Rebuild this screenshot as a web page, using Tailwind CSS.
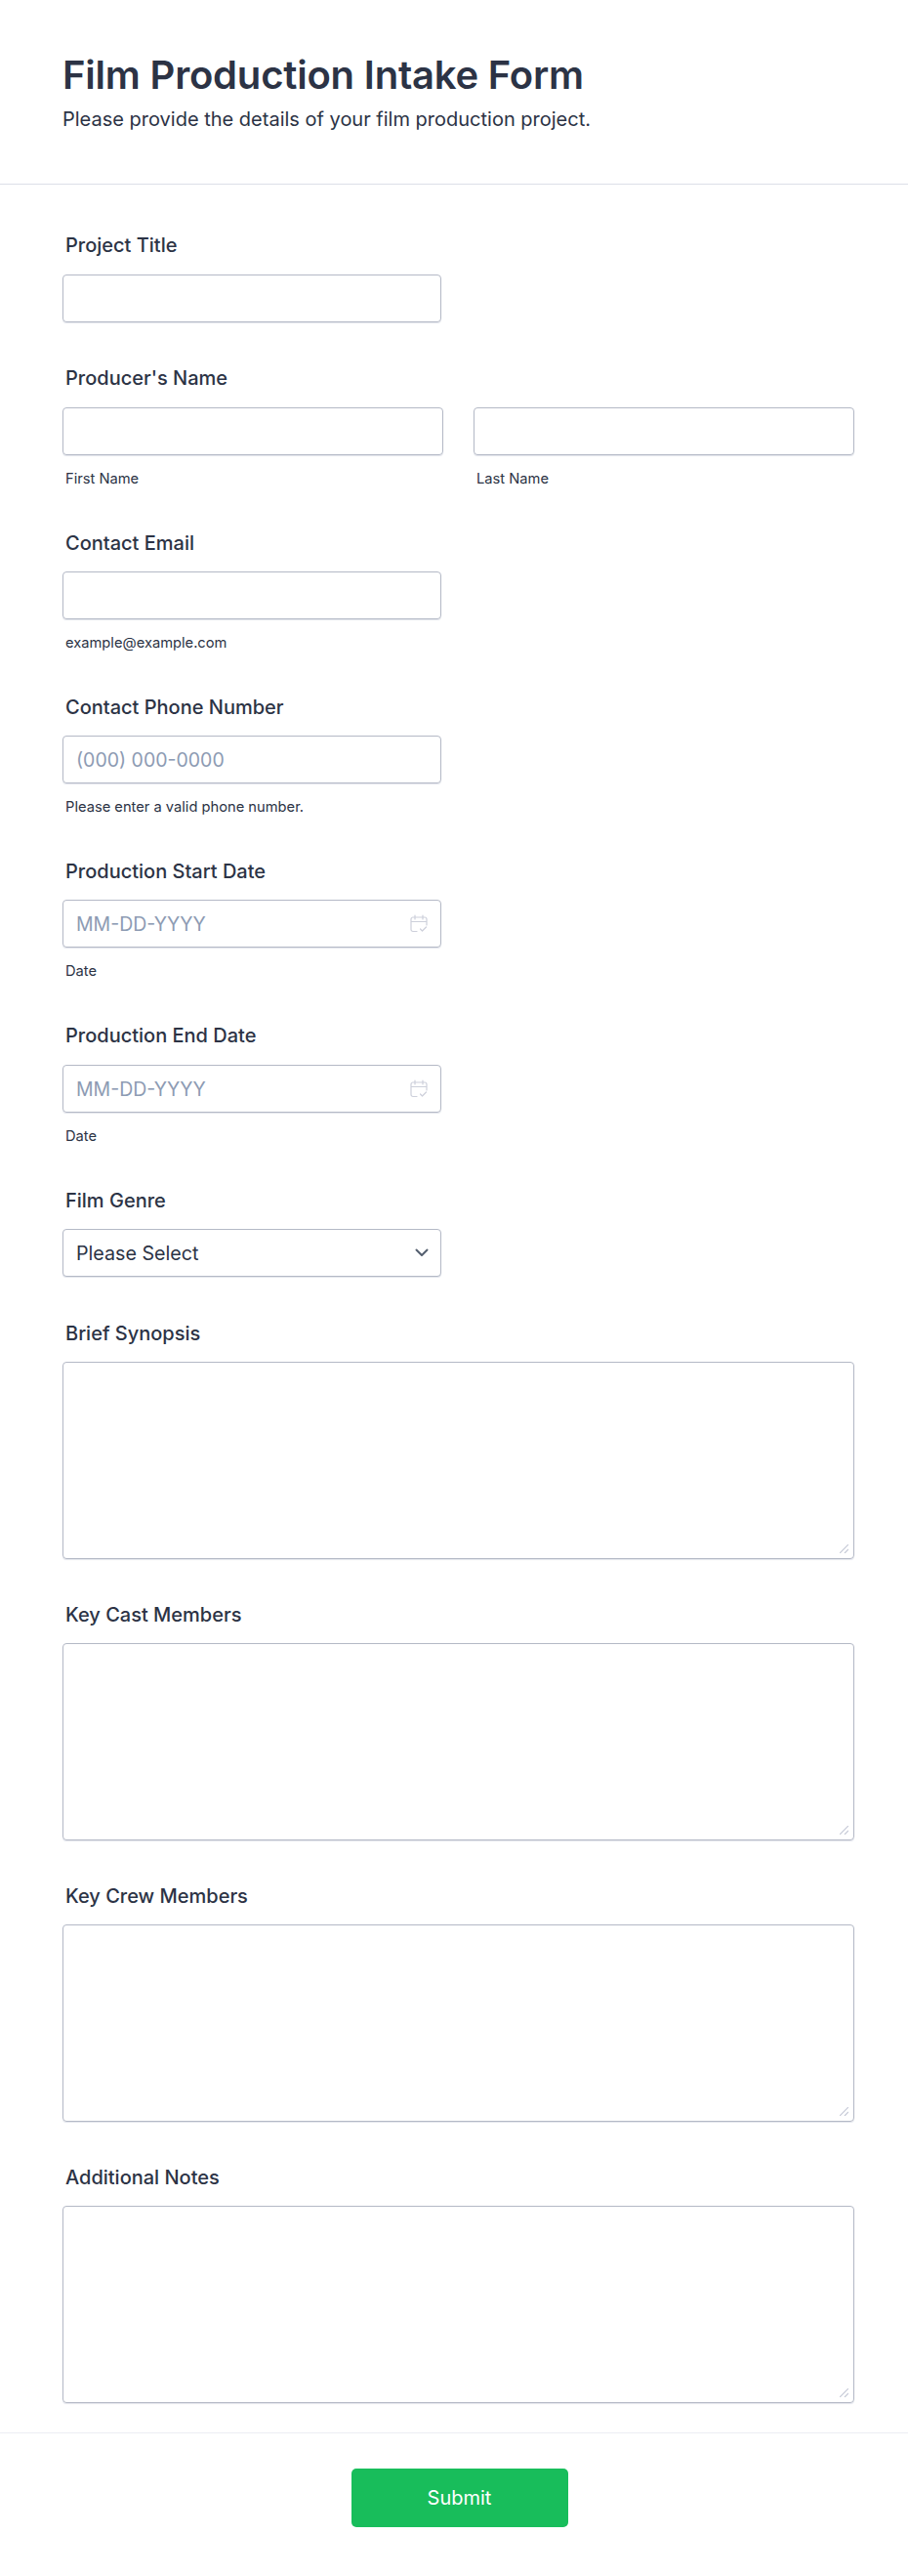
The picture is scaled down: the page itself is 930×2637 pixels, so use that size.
<!DOCTYPE html>
<html lang="en">
<head>
    <meta charset="UTF-8">
    <meta name="viewport" content="width=device-width, initial-scale=1.0">
    <title>Film Production Intake Form</title>
    <script src="https://cdn.jsdelivr.net/npm/@tailwindcss/browser@4"></script>
</head>
<body class="bg-white text-[#2c3345] font-['Inter',sans-serif]">
    <form class="h-[2637px] overflow-hidden">
        <header class="h-[189px] border-b border-[#dcdfe8] px-16 pt-[52px]">
            <h1 class="text-[40px] leading-[50px] font-semibold tracking-[-0.2px]">Film Production Intake Form</h1>
            <p class="text-[20px] leading-[28px] mt-[6px]">Please provide the details of your film production project.</p>
        </header>

        <div class="pl-16 pr-[55px] pt-[50px]">
            <!-- Project Title -->
            <label class="block text-[20px] leading-6 font-[450] pl-[3px] mb-[18px]">Project Title</label>
            <input type="text" class="block w-[388px] h-[49px] border border-[#b4b9c6] shadow-[0_1px_1px_#e3e5ec] rounded px-[13px] text-[19.5px]">

            <!-- Producer's Name -->
            <label class="block text-[20px] leading-6 font-[450] pl-[3px] mt-[45px] mb-[18px]">Producer's Name</label>
            <div class="flex gap-[31px]">
                <div class="flex-1">
                    <input type="text" class="block w-full h-[49px] border border-[#b4b9c6] shadow-[0_1px_1px_#e3e5ec] rounded px-[13px] text-[19.5px]">
                    <p class="text-[14.7px] leading-5 pl-[3px] mt-[14px]">First Name</p>
                </div>
                <div class="flex-1">
                    <input type="text" class="block w-full h-[49px] border border-[#b4b9c6] shadow-[0_1px_1px_#e3e5ec] rounded px-[13px] text-[19.5px]">
                    <p class="text-[14.7px] leading-5 pl-[3px] mt-[14px]">Last Name</p>
                </div>
            </div>

            <!-- Contact Email -->
            <label class="block text-[20px] leading-6 font-[450] pl-[3px] mt-[44px] mb-[17px]">Contact Email</label>
            <input type="email" class="block w-[388px] h-[49px] border border-[#b4b9c6] shadow-[0_1px_1px_#e3e5ec] rounded px-[13px] text-[19.5px]">
            <p class="text-[14.7px] leading-5 pl-[3px] mt-[14px]">example@example.com</p>

            <!-- Contact Phone Number -->
            <label class="block text-[20px] leading-6 font-[450] pl-[3px] mt-[44px] mb-[17px]">Contact Phone Number</label>
            <input type="tel" placeholder="(000) 000-0000" class="block w-[388px] h-[49px] border border-[#b4b9c6] shadow-[0_1px_1px_#e3e5ec] rounded px-[13px] pt-[1px] text-[19.5px] placeholder:text-[#8d9bb3]">
            <p class="text-[14.7px] leading-5 pl-[3px] mt-[14px]">Please enter a valid phone number.</p>

            <!-- Production Start Date -->
            <label class="block text-[20px] leading-6 font-[450] pl-[3px] mt-[44px] mb-[17px]">Production Start Date</label>
            <div class="relative w-[388px]">
                <input type="text" placeholder="MM-DD-YYYY" class="block w-full h-[49px] border border-[#b4b9c6] shadow-[0_1px_1px_#e3e5ec] rounded px-[13px] pt-[1px] text-[19.5px] placeholder:text-[#8d9bb3]">
                <svg class="absolute right-[14px] top-[15px] w-[18px] h-[19px]" viewBox="0 0 18 19" fill="none" stroke="#cdd0db" stroke-width="1.2" stroke-linecap="round" stroke-linejoin="round">
                    <path d="M7 17.5H3a2 2 0 0 1-2-2V5a2 2 0 0 1 2-2h12a2 2 0 0 1 2 2v6M1 7.5h16M5 1v4M13 1v4M10.5 15l2 2 4-4"/>
                </svg>
            </div>
            <p class="text-[14.7px] leading-5 pl-[3px] mt-[14px]">Date</p>

            <!-- Production End Date -->
            <label class="block text-[20px] leading-6 font-[450] pl-[3px] mt-[44px] mb-[18px]">Production End Date</label>
            <div class="relative w-[388px]">
                <input type="text" placeholder="MM-DD-YYYY" class="block w-full h-[49px] border border-[#b4b9c6] shadow-[0_1px_1px_#e3e5ec] rounded px-[13px] pt-[1px] text-[19.5px] placeholder:text-[#8d9bb3]">
                <svg class="absolute right-[14px] top-[15px] w-[18px] h-[19px]" viewBox="0 0 18 19" fill="none" stroke="#cdd0db" stroke-width="1.2" stroke-linecap="round" stroke-linejoin="round">
                    <path d="M7 17.5H3a2 2 0 0 1-2-2V5a2 2 0 0 1 2-2h12a2 2 0 0 1 2 2v6M1 7.5h16M5 1v4M13 1v4M10.5 15l2 2 4-4"/>
                </svg>
            </div>
            <p class="text-[14.7px] leading-5 pl-[3px] mt-[14px]">Date</p>

            <!-- Film Genre -->
            <label class="block text-[20px] leading-6 font-[450] pl-[3px] mt-[44px] mb-[17px]">Film Genre</label>
            <div class="relative w-[388px]">
                <select class="block w-full h-[49px] border border-[#b4b9c6] shadow-[0_1px_1px_#e3e5ec] rounded px-[13px] pt-[2px] text-[19.7px] appearance-none bg-white">
                    <option>Please Select</option>
                </select>
                <svg class="absolute right-[13px] top-[20px] w-[14px] h-[9px]" viewBox="0 0 14 9" fill="none" stroke="#545f6f" stroke-width="2" stroke-linecap="round" stroke-linejoin="round">
                    <path d="M1.5 1.5 7 7l5.5-5.5"/>
                </svg>
            </div>

            <!-- Brief Synopsis -->
            <label class="block text-[20px] leading-6 font-[450] pl-[3px] mt-[46px] mb-[17px]">Brief Synopsis</label>
            <div class="relative">
                <textarea class="block w-full h-[202px] border border-[#b4b9c6] shadow-[0_1px_1px_#e3e5ec] rounded resize-none"></textarea>
                <svg class="absolute right-[6px] bottom-[6px] w-[9px] h-[9px]" viewBox="0 0 9 9" fill="none" stroke="#c5c9d6" stroke-width="1.2"><path d="M0 9 9 0M5 9l4-4"/></svg>
            </div>

            <!-- Key Cast Members -->
            <label class="block text-[20px] leading-6 font-[450] pl-[3px] mt-[45px] mb-[17px]">Key Cast Members</label>
            <div class="relative">
                <textarea class="block w-full h-[202px] border border-[#b4b9c6] shadow-[0_1px_1px_#e3e5ec] rounded resize-none"></textarea>
                <svg class="absolute right-[6px] bottom-[6px] w-[9px] h-[9px]" viewBox="0 0 9 9" fill="none" stroke="#c5c9d6" stroke-width="1.2"><path d="M0 9 9 0M5 9l4-4"/></svg>
            </div>

            <!-- Key Crew Members -->
            <label class="block text-[20px] leading-6 font-[450] pl-[3px] mt-[45px] mb-[17px]">Key Crew Members</label>
            <div class="relative">
                <textarea class="block w-full h-[202px] border border-[#b4b9c6] shadow-[0_1px_1px_#e3e5ec] rounded resize-none"></textarea>
                <svg class="absolute right-[6px] bottom-[6px] w-[9px] h-[9px]" viewBox="0 0 9 9" fill="none" stroke="#c5c9d6" stroke-width="1.2"><path d="M0 9 9 0M5 9l4-4"/></svg>
            </div>

            <!-- Additional Notes -->
            <label class="block text-[20px] leading-6 font-[450] pl-[3px] mt-[45px] mb-[17px]">Additional Notes</label>
            <div class="relative">
                <textarea class="block w-full h-[202px] border border-[#b4b9c6] shadow-[0_1px_1px_#e3e5ec] rounded resize-none"></textarea>
                <svg class="absolute right-[6px] bottom-[6px] w-[9px] h-[9px]" viewBox="0 0 9 9" fill="none" stroke="#c5c9d6" stroke-width="1.2"><path d="M0 9 9 0M5 9l4-4"/></svg>
            </div>
        </div>

        <footer class="mt-[30px] border-t border-[#eceef3] pt-[36px] pl-[11px] flex justify-center">
            <button type="button" class="w-[222px] h-[60px] bg-[#18bd5b] text-white text-[20px] font-normal rounded-[5px]">Submit</button>
        </footer>
    </form>
</body>
</html>
